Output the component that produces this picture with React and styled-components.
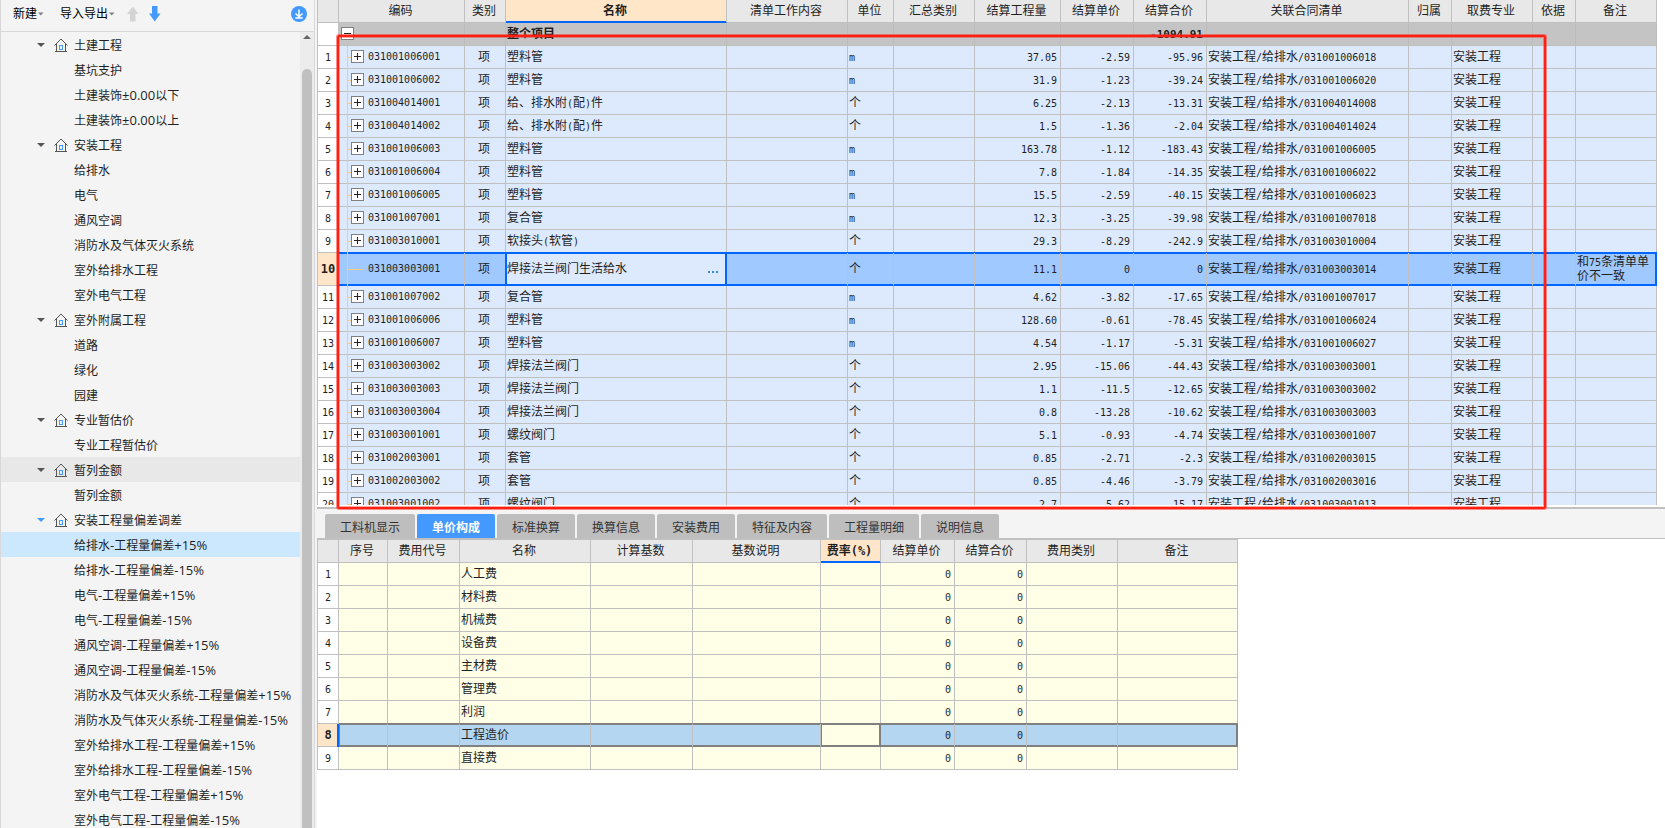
import React from "react";
import styled, { createGlobalStyle, css } from "styled-components";

const GlobalStyle = createGlobalStyle`
  * { box-sizing: border-box; }
  body {
    margin: 0;
    background: #f4f4f4;
    color: #1f1f1f;
    font-family: "Liberation Sans", "Noto Sans CJK SC", sans-serif;
    font-size: 12px;
  }
  button, input { font: inherit; color: inherit; }
  button { border: 0; padding: 0; background: none; cursor: pointer; }
`;

const line = "#c0c0c0";
const accent = "#0066ff";
const branch = "#ffc880";

const Page = styled.div`
  display: flex;
  height: 100vh;
  overflow: hidden;
`;

/* ---------- sidebar ---------- */

const Sidebar = styled.aside`
  display: flex;
  flex-direction: column;
  flex: 0 0 315px;
  border-left: 1px solid #d8d8d8;
  border-right: 1px solid #d8d8d8;
`;

const Toolbar = styled.div`
  display: flex;
  align-items: center;
  flex: 0 0 32px;
  padding: 0 7px 4px 12px;
  border-bottom: 1px solid #d8d8d8;
`;

const MenuButton = styled.button`
  display: flex;
  align-items: center;
  gap: 1px;
  margin-right: ${(p) => (p.$tight ? "12px" : "16px")};
  line-height: 20px;
  color: #000;
`;

const IconButton = styled.button`
  display: flex;
  margin-right: ${(p) => (p.$last ? "0" : "10px")};
  margin-left: ${(p) => (p.$last ? "auto" : "0")};
`;

const TreeArea = styled.div`
  display: flex;
  flex: 1;
  min-height: 0;
`;

const Tree = styled.ul`
  flex: 1;
  margin: 0;
  padding: 0;
  list-style: none;
  overflow: hidden;
`;

const TreeItem = styled.li`
  display: flex;
  align-items: center;
  height: 25px;
  padding-left: ${(p) => (p.$group ? "36px" : "73px")};
  background: ${(p) => (p.$selected ? "#cce8ff" : p.$hover ? "#e8e8e8" : "transparent")};
  white-space: nowrap;
  span {
    font-family: "Open Sans", "Noto Sans CJK SC", sans-serif;
    font-size: 13px;
  }
`;

const Scrollbar = styled.div`
  display: flex;
  flex-direction: column;
  align-items: center;
  flex: 0 0 14px;
  background: #ececec;
`;

const ScrollUp = styled.button`
  display: flex;
  align-items: center;
  height: 10px;
  margin-bottom: 27px;
`;

const Thumb = styled.div`
  flex: 1;
  width: 10px;
  border-radius: 5px 5px 0 0;
  background: ${line};
`;

/* ---------- tables ---------- */

const Main = styled.main`
  display: flex;
  flex-direction: column;
  flex: 1;
  min-width: 0;
  margin-left: 2px;
`;

const UpperPane = styled.section`
  position: relative;
  flex: 1;
  min-height: 0;
  padding-bottom: 2px;
  background: #fff;
  border-bottom: 2px solid ${line};
`;

const Clip = styled.div`
  height: 100%;
  overflow: hidden;
`;

const LowerPane = styled.section`
  flex: 0 0 319px;
  overflow: hidden;
  background: #fff;
`;

const Marker = styled.div`
  position: absolute;
  top: 35px;
  right: 119px;
  bottom: -2px;
  left: 20px;
  border: 2px solid #ff2014;
  border-radius: 2px;
  box-shadow: 0 0 0 1px rgba(255, 32, 20, 0.5), inset 0 0 0 1px rgba(255, 32, 20, 0.4);
  pointer-events: none;
`;

const Table = styled.table`
  width: min-content;
  table-layout: fixed;
  border-collapse: separate;
  border-spacing: 0;
  border-left: 1px solid ${line};
  border-top: ${(p) => (p.$topLine ? `1px solid ${line}` : "0")};
  line-height: 14px;
`;

const cell = css`
  padding: 0 3px 0 1px;
  border-right: 1px solid ${line};
  border-bottom: 1px solid ${line};
  span {
    font-family: "DejaVu Sans Mono", monospace;
    font-size: 10px;
    line-height: 12px;
  }
`;

const HeadCell = styled.th`
  ${cell}
  height: 23px;
  background: ${(p) => (p.$active ? "#ffe6c8" : "#e8e8e8")};
  font-weight: ${(p) => (p.$active ? "bold" : "normal")};
  white-space: nowrap;
  ${(p) =>
    p.$active &&
    css`
      border-bottom-color: ${accent};
      box-shadow: inset 0 -1px 0 ${accent};
      span { font-size: 12px; }
    `}
`;

const NumberCell = styled.th`
  ${cell}
  padding: 0;
  background: ${(p) => (p.$active ? "#ffe6c8" : "#fff")};
  font-weight: ${(p) => (p.$active ? "bold" : "normal")};
  ${(p) => p.$active && css`span { font-size: 12px; }`}
`;

const Cell = styled.td`
  ${cell}
  height: 23px;
  text-align: ${(p) => p.$align || "left"};
`;

const UpperRow = styled.tr`
  td {
    background: #ddeafe;
  }
  ${(p) =>
    p.$total &&
    css`
      font-weight: bold;
      td {
        background: #c4c4c4;
        border-right-color: #bcbcbc;
      }
      td span { font-size: 11px; }
    `}
  ${(p) =>
    p.$selected &&
    css`
      td {
        height: 33px;
        background: #9fc9ff;
        border-bottom-color: ${accent};
        box-shadow: 0 -1px 0 ${accent}, inset 0 1px 0 ${accent}, inset 0 -1px 0 ${accent};
      }
      td:last-child {
        border-right-color: ${accent};
        box-shadow: 0 -1px 0 ${accent}, inset 0 1px 0 ${accent}, inset -1px -1px 0 ${accent};
      }
    `}
`;

const EditCell = styled(Cell)`
  && {
    padding: 0;
    background: #ddeafe;
    border-right-color: ${accent};
    box-shadow: 0 -1px 0 ${accent}, inset 1px 1px 0 ${accent}, inset -1px -1px 0 ${accent},
      -1px 0 0 ${accent};
  }
`;

const Editor = styled.div`
  display: flex;
  align-items: center;
  padding: 0 7px 0 1px;
`;

const NameInput = styled.input`
  flex: 1;
  min-width: 0;
  padding: 0;
  border: 0;
  outline: 0;
  background: none;
`;

const CodeCell = styled(Cell)`
  padding: 0;
`;

const CodeBox = styled.div`
  display: flex;
  align-items: center;
  height: ${(p) => (p.$tall ? "32px" : "22px")};
  padding-bottom: 1px;
  padding-left: ${(p) => (p.$root ? "2px" : "8px")};
`;

const Branch = styled.i`
  align-self: stretch;
  width: ${(p) => (p.$leaf ? "17px" : "4px")};
  margin-right: ${(p) => (p.$leaf ? "4px" : "0")};
  margin-bottom: -2px;
  border-left: 1px solid ${branch};
  background: linear-gradient(${branch}, ${branch}) no-repeat center / 100% 1px;
`;

const Expander = styled.button`
  width: 13px;
  height: 13px;
  margin-right: 4px;
  border: 1px solid #808080;
  background:
    linear-gradient(#222, #222) no-repeat center / 7px 1px,
    ${(p) => (p.$open ? "" : "linear-gradient(#222, #222) no-repeat center / 1px 7px,")}
    #fff;
`;

const LowerRow = styled.tr`
  td {
    background: #ffffe8;
  }
  ${(p) =>
    p.$selected &&
    css`
      td {
        background: #b4d6f1;
        border-bottom-color: #808080;
        box-shadow: 0 -1px 0 #808080, inset 0 1px 0 #808080, inset 0 -1px 0 #808080;
      }
      td:nth-child(2) {
        box-shadow: -2px 0 0 ${accent}, 0 -1px 0 #808080, inset 1px 1px 0 #808080, inset 0 -1px 0 #808080;
      }
      td:nth-child(7) {
        background: #ffffe8;
        border-right-color: #808080;
        box-shadow: 0 -1px 0 #808080, inset 1px 1px 0 #808080, inset -1px -1px 0 #808080;
      }
      td:last-child {
        border-right-color: #808080;
        box-shadow: 0 -1px 0 #808080, inset 0 1px 0 #808080, inset -1px -1px 0 #808080;
      }
    `}
`;

const Tabs = styled.div`
  display: flex;
  gap: 2px;
  padding: 5px 8px 0;
  background: #f4f4f4;
  border-bottom: 1px solid ${line};
`;

const Tab = styled.button`
  height: 24px;
  padding: 0 15px;
  border-radius: 2px 2px 0 0;
  background: ${(p) => (p.$active ? "#4499ff" : "#bebebe")};
  color: ${(p) => (p.$active ? "#fff" : "#333")};
  font-weight: ${(p) => (p.$active ? "bold" : "normal")};
  white-space: nowrap;
`;

/* ---------- icons ---------- */

const Caret = ({ color = "#555", small }) =>
  small ? (
    <svg width="6" height="4" viewBox="0 0 6 4">
      <path d="M0 .5h5.500L2.750 3.500z" fill={color} />
    </svg>
  ) : (
    <svg width="8" height="4" viewBox="0 0 8 4">
      <path d="M0 0h8L4 4z" fill={color} />
    </svg>
  );

const Arrow = ({ down, color }) => (
  <svg width="12" height="16" viewBox="0 0 12 16">
    <path
      d={down ? "M3 0h5.500v7.500H11.500L5.750 15.500 0 7.500h3z" : "M5.750 .5 11.500 8H8.500v7.500H3V8H0z"}
      fill={color}
    />
  </svg>
);

const House = () => (
  <svg width="14" height="14" viewBox="0 0 14 14" fill="none" stroke="#555">
    <path d="M.5 7.500 7 1l6.500 6.500M2.500 6v7.500h9V6M1 13.500h12" />
    <rect x="5.500" y="7.500" width="3" height="4" stroke="#4499ff" />
  </svg>
);

const Download = () => (
  <svg width="16" height="16" viewBox="0 0 16 16" fill="none" stroke="#fff" strokeWidth="1.500">
    <circle cx="8" cy="8" r="8" fill="#4499ff" stroke="none" />
    <path d="M8 3.500v6.500M4.500 7.500 8 10.700l3.500-3.200M4.300 12h7.400" />
  </svg>
);

const Dots = () => (
  <svg width="11" height="2" viewBox="0 0 11 2" fill="#3a8ad4">
    <path d="M0 0h2v2H0zM4 0h2v2H4zM8 0h2v2H8z" />
  </svg>
);

const GroupMark = styled.div`
  display: flex;
  align-items: center;
  gap: 9px;
  margin-right: 6px;
`;

/* Half-width characters get their own face beside the Chinese text */
const Mixed = ({ children }) =>
  String(children ?? "")
    .split(/([\x21-\x7e±]+)/)
    .map((part, i) => (i % 2 ? <span key={i}>{part}</span> : part));

/* ---------- data ---------- */

const tree = [
  ["土建工程", ["基坑支护", "土建装饰±0.00以下", "土建装饰±0.00以上"]],
  ["安装工程", ["给排水", "电气", "通风空调", "消防水及气体灭火系统", "室外给排水工程", "室外电气工程"]],
  ["室外附属工程", ["道路", "绿化", "园建"]],
  ["专业暂估价", ["专业工程暂估价"]],
  ["暂列金额", ["暂列金额"]],
  [
    "安装工程量偏差调差",
    [
      "给排水-工程量偏差+15%",
      "给排水-工程量偏差-15%",
      "电气-工程量偏差+15%",
      "电气-工程量偏差-15%",
      "通风空调-工程量偏差+15%",
      "通风空调-工程量偏差-15%",
      "消防水及气体灭火系统-工程量偏差+15%",
      "消防水及气体灭火系统-工程量偏差-15%",
      "室外给排水工程-工程量偏差+15%",
      "室外给排水工程-工程量偏差-15%",
      "室外电气工程-工程量偏差+15%",
      "室外电气工程-工程量偏差-15%",
    ],
  ],
];

const upperColumns = [
  ["", 21], ["编码", 126], ["类别", 41], ["名称", 221], ["清单工作内容", 121],
  ["单位", 46], ["汇总类别", 81], ["结算工程量", 86], ["结算单价", 73], ["结算合价", 73],
  ["关联合同清单", 202], ["归属", 43], ["取费专业", 81], ["依据", 43], ["备注", 81],
];

// code, name, unit, quantity, unit price, total, linked item
const items = [
  ["031001006001", "塑料管", "m", "37.05", "-2.59", "-95.96", "031001006018"],
  ["031001006002", "塑料管", "m", "31.9", "-1.23", "-39.24", "031001006020"],
  ["031004014001", "给、排水附(配)件", "个", "6.25", "-2.13", "-13.31", "031004014008"],
  ["031004014002", "给、排水附(配)件", "个", "1.5", "-1.36", "-2.04", "031004014024"],
  ["031001006003", "塑料管", "m", "163.78", "-1.12", "-183.43", "031001006005"],
  ["031001006004", "塑料管", "m", "7.8", "-1.84", "-14.35", "031001006022"],
  ["031001006005", "塑料管", "m", "15.5", "-2.59", "-40.15", "031001006023"],
  ["031001007001", "复合管", "m", "12.3", "-3.25", "-39.98", "031001007018"],
  ["031003010001", "软接头(软管)", "个", "29.3", "-8.29", "-242.9", "031003010004"],
  ["031003003001", "焊接法兰阀门生活给水", "个", "11.1", "0", "0", "031003003014", "和75条清单单价不一致"],
  ["031001007002", "复合管", "m", "4.62", "-3.82", "-17.65", "031001007017"],
  ["031001006006", "塑料管", "m", "128.60", "-0.61", "-78.45", "031001006024"],
  ["031001006007", "塑料管", "m", "4.54", "-1.17", "-5.31", "031001006027"],
  ["031003003002", "焊接法兰阀门", "个", "2.95", "-15.06", "-44.43", "031003003001"],
  ["031003003003", "焊接法兰阀门", "个", "1.1", "-11.5", "-12.65", "031003003002"],
  ["031003003004", "焊接法兰阀门", "个", "0.8", "-13.28", "-10.62", "031003003003"],
  ["031003001001", "螺纹阀门", "个", "5.1", "-0.93", "-4.74", "031003001007"],
  ["031002003001", "套管", "个", "0.85", "-2.71", "-2.3", "031002003015"],
  ["031002003002", "套管", "个", "0.85", "-4.46", "-3.79", "031002003016"],
  ["031003001002", "螺纹阀门", "个", "2.7", "-5.62", "-15.17", "031003001013"],
];

const tabs = ["工料机显示", "单价构成", "标准换算", "换算信息", "安装费用", "特征及内容", "工程量明细", "说明信息"];

const lowerColumns = [
  ["", 21], ["序号", 49], ["费用代号", 72], ["名称", 131], ["计算基数", 102], ["基数说明", 128],
  ["费率(%)", 60], ["结算单价", 74], ["结算合价", 72], ["费用类别", 91], ["备注", 120],
];

const fees = ["人工费", "材料费", "机械费", "设备费", "主材费", "管理费", "利润", "工程造价", "直接费"];

/* ---------- parts ---------- */

function TableHead({ columns, active }) {
  return (
    <>
      <colgroup>
        {columns.map(([title, width], i) => (
          <col key={i} width={width} />
        ))}
      </colgroup>
      <thead>
        <tr>
          {columns.map(([title], i) => (
            <HeadCell key={i} scope="col" $active={title === active}>
              <Mixed>{title}</Mixed>
            </HeadCell>
          ))}
        </tr>
      </thead>
    </>
  );
}

function ProjectTree() {
  return (
    <Tree>
      {tree.map(([group, children], g) => (
        <React.Fragment key={group}>
          <TreeItem $group $hover={g === 4}>
            <GroupMark>
              <Caret color={g === 5 ? "#4499ff" : "#555"} />
              <House />
            </GroupMark>
            {group}
          </TreeItem>
          {children.map((name, i) => (
            <TreeItem key={name} $selected={g === 5 && i === 0}>
              <Mixed>{name}</Mixed>
            </TreeItem>
          ))}
        </React.Fragment>
      ))}
    </Tree>
  );
}

function ItemRow({ item, number }) {
  const [code, name, unit, quantity, price, total, linked, note] = item;
  const selected = number === 10;
  return (
    <UpperRow $selected={selected}>
      <NumberCell scope="row" $active={selected}><Mixed>{number}</Mixed></NumberCell>
      <CodeCell>
        <CodeBox $tall={selected}>
          <Branch $leaf={selected} />
          {!selected && <Expander aria-label={"展开 " + code} />}
          <Mixed>{code}</Mixed>
        </CodeBox>
      </CodeCell>
      <Cell $align="center">项</Cell>
      {selected ? (
        <EditCell>
          <Editor>
            <NameInput aria-label="名称" defaultValue={name} />
            <button aria-label="更多"><Dots /></button>
          </Editor>
        </EditCell>
      ) : (
        <Cell><Mixed>{name}</Mixed></Cell>
      )}
      <Cell />
      <Cell><Mixed>{unit}</Mixed></Cell>
      <Cell />
      <Cell $align="right"><Mixed>{quantity}</Mixed></Cell>
      <Cell $align="right"><Mixed>{price}</Mixed></Cell>
      <Cell $align="right"><Mixed>{total}</Mixed></Cell>
      <Cell><Mixed>{"安装工程/给排水/" + linked}</Mixed></Cell>
      <Cell />
      <Cell>安装工程</Cell>
      <Cell />
      <Cell><Mixed>{note}</Mixed></Cell>
    </UpperRow>
  );
}

function App() {
  return (
    <Page>
      <GlobalStyle />
      <Sidebar>
        <Toolbar>
          <MenuButton>新建<Caret small color="#808080" /></MenuButton>
          <MenuButton $tight>导入导出<Caret small color="#808080" /></MenuButton>
          <IconButton aria-label="上移"><Arrow color="#d4d4d4" /></IconButton>
          <IconButton aria-label="下移"><Arrow down color="#4499ff" /></IconButton>
          <IconButton aria-label="下载" $last><Download /></IconButton>
        </Toolbar>
        <TreeArea>
          <ProjectTree />
          <Scrollbar>
            <ScrollUp aria-label="向上滚动">
              <svg width="8" height="4" viewBox="0 0 8 4"><path d="M0 4h8L4 0z" fill="#666" /></svg>
            </ScrollUp>
            <Thumb />
          </Scrollbar>
        </TreeArea>
      </Sidebar>

      <Main>
        <UpperPane>
          <Clip>
            <Table>
              <TableHead columns={upperColumns} active="名称" />
              <tbody>
                <UpperRow $total>
                  <NumberCell />
                  <CodeCell>
                    <CodeBox $root><Expander $open aria-label="收起" /></CodeBox>
                  </CodeCell>
                  <Cell />
                  <Cell>整个项目</Cell>
                  <Cell /><Cell /><Cell /><Cell /><Cell />
                  <Cell $align="right"><Mixed>-1094.91</Mixed></Cell>
                  <Cell /><Cell /><Cell /><Cell /><Cell />
                </UpperRow>
                {items.map((item, i) => (
                  <ItemRow key={item[0]} item={item} number={i + 1} />
                ))}
              </tbody>
            </Table>
          </Clip>
          <Marker />
        </UpperPane>

        <LowerPane>
          <Tabs role="tablist">
            {tabs.map((tab, i) => (
              <Tab key={tab} role="tab" aria-selected={i === 1} $active={i === 1}>{tab}</Tab>
            ))}
          </Tabs>
          <Table $topLine>
            <TableHead columns={lowerColumns} active="费率(%)" />
            <tbody>
              {fees.map((fee, i) => (
                <LowerRow key={fee} $selected={i === 7}>
                  <NumberCell scope="row" $active={i === 7}><Mixed>{i + 1}</Mixed></NumberCell>
                  <Cell />
                  <Cell />
                  <Cell>{fee}</Cell>
                  <Cell />
                  <Cell />
                  <Cell />
                  <Cell $align="right"><Mixed>0</Mixed></Cell>
                  <Cell $align="right"><Mixed>0</Mixed></Cell>
                  <Cell />
                  <Cell />
                </LowerRow>
              ))}
            </tbody>
          </Table>
        </LowerPane>
      </Main>
    </Page>
  );
}

export default App;
